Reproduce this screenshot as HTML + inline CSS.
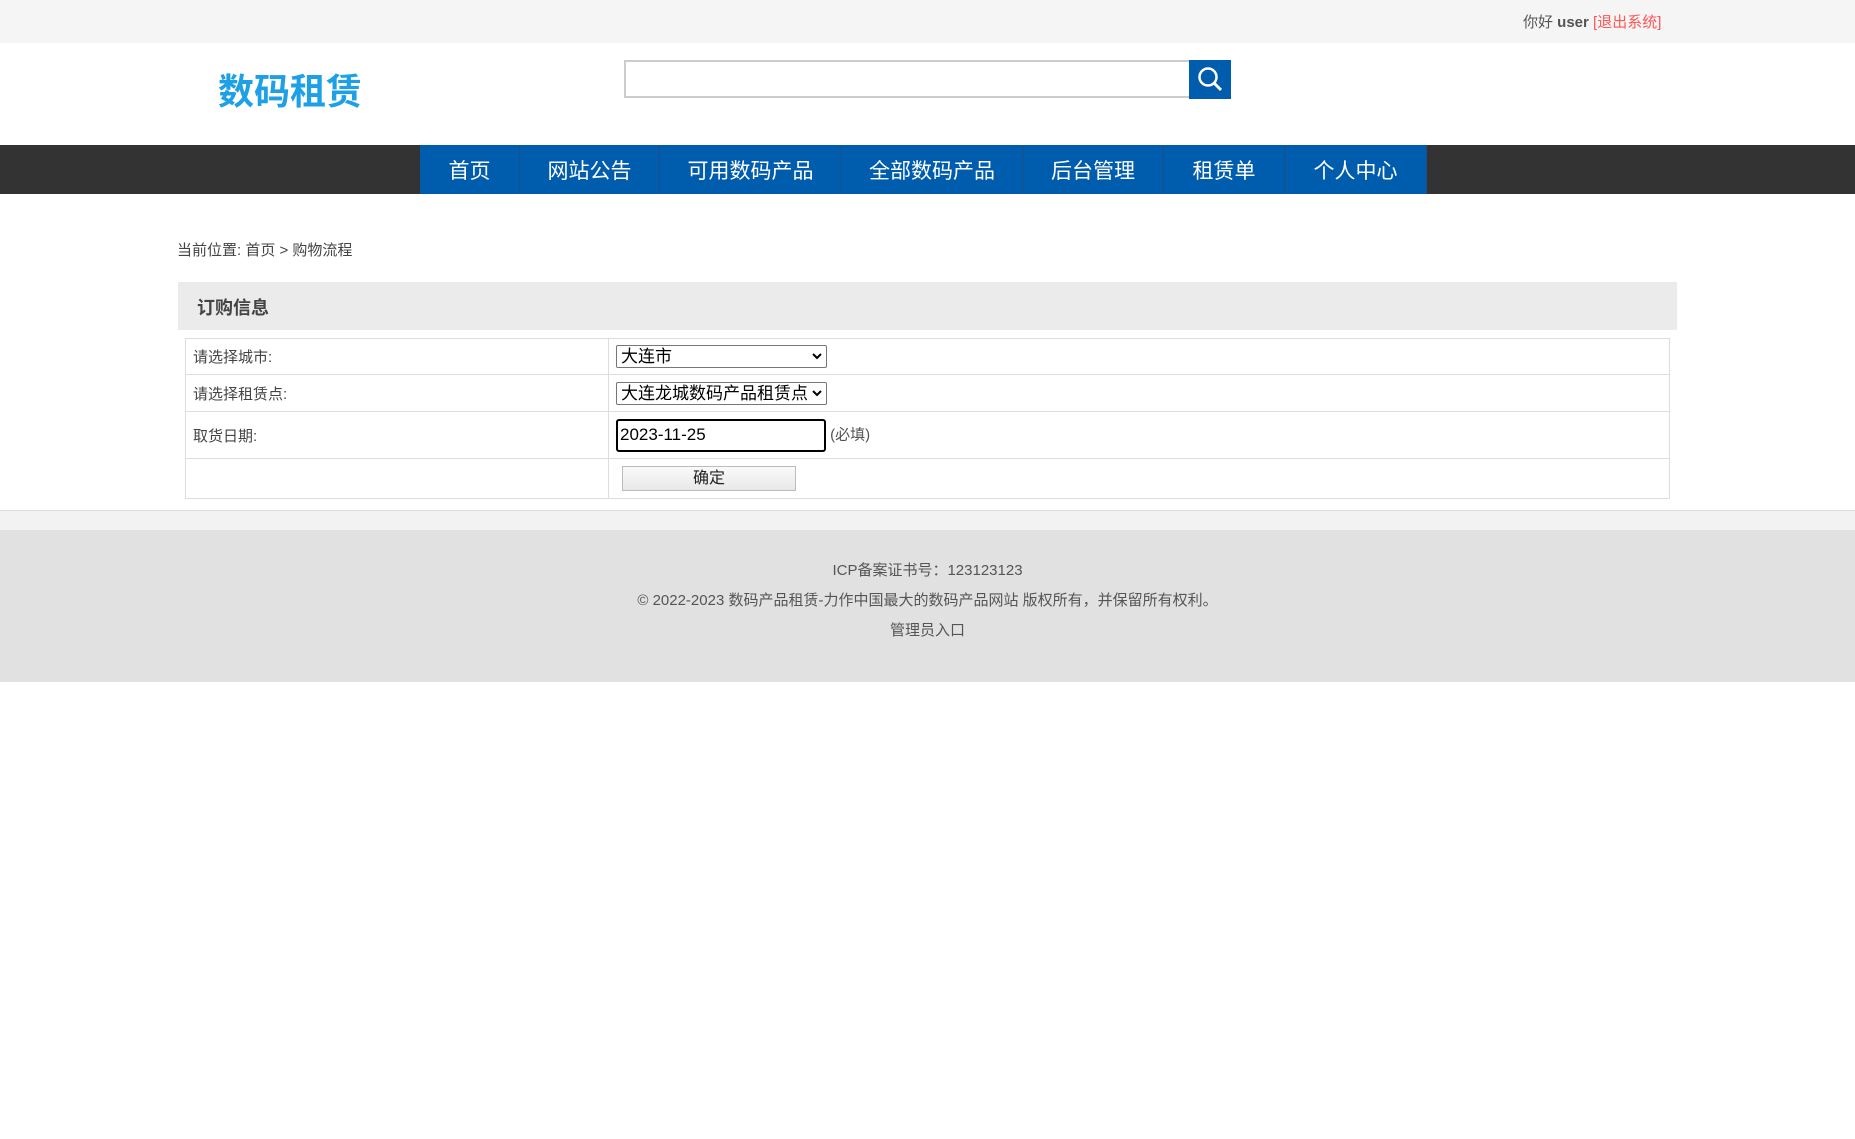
<!DOCTYPE html>
<html><head><meta charset="utf-8"><style>
*{margin:0;padding:0;box-sizing:border-box}
body{width:1855px;height:1139px;background:#fff;font-family:"Liberation Sans","Noto Sans CJK SC",sans-serif;position:relative;overflow:hidden;color:#333}
.a{position:absolute}
.nav a{position:absolute;top:0;height:49px;line-height:49px;padding-top:2px;text-align:center;color:#fff;font-size:21px;border-right:1px solid #1a4f86}
td{border:1px solid #ddd;font-size:15px;color:#444;padding-left:7px}
.sel{position:absolute;right:2px;top:0;background:#fff;width:14px;height:21px}
</style></head><body>
<div class="a" style="left:0;top:0;width:1855px;height:43px;background:#f5f5f5"></div>
<div class="a" style="left:1523px;top:11px;font-size:15px;color:#555">你好 <b>user</b> <span style="color:#f55">[退出系统]</span></div>
<div class="a" style="left:218px;top:63px;font-size:36px;font-weight:bold;color:#1ea0e6">数码租赁</div>
<div class="a" style="left:624px;top:60px;width:566px;height:38px;border:2px solid #ccc;border-right:none"></div>
<div class="a" style="left:1189px;top:60px;width:42px;height:39px;background:#005cad">
<svg width="42" height="39" viewBox="0 0 42 39"><circle cx="19" cy="17" r="8.5" fill="none" stroke="#fff" stroke-width="2.5"/><line x1="25" y1="23" x2="32" y2="30" stroke="#fff" stroke-width="3"/></svg></div>
<div class="a" style="left:0;top:145px;width:1855px;height:49px;background:#333"></div>
<div class="a nav" style="left:420px;top:145px;width:1007px;height:49px;background:#005cad;overflow:hidden">
<a style="left:0;width:100px">首页</a>
<a style="left:100px;width:140px">网站公告</a>
<a style="left:240px;width:182px">可用数码产品</a>
<a style="left:422px;width:181px">全部数码产品</a>
<a style="left:603px;width:141px">后台管理</a>
<a style="left:744px;width:121px">租赁单</a>
<a style="left:865px;width:142px">个人中心</a>
</div>
<div class="a" style="left:177px;top:239px;font-size:15px;color:#444">当前位置: 首页 &gt; 购物流程</div>
<div class="a" style="left:178px;top:282px;width:1499px;height:48px;background:#ebebeb"></div>
<div class="a" style="left:197px;top:294px;font-size:18px;font-weight:bold;color:#444">订购信息</div>
<table class="a" style="left:185px;top:338px;width:1485px;border-collapse:collapse">
<tr style="height:36px"><td style="width:423px">请选择城市:</td><td><div style="width:211px;height:23px;border:1px solid #767676;border-radius:2px;font-size:17px;color:#000;padding-left:4px;line-height:21px;position:relative">大连市<svg class="sel" viewBox="0 0 14 21"><path d="M3 8 L7 12 L11 8" fill="none" stroke="#000" stroke-width="2"/></svg></div></td></tr>
<tr style="height:37px"><td>请选择租赁点:</td><td><div style="width:211px;height:23px;border:1px solid #767676;border-radius:2px;font-size:17px;color:#000;padding-left:4px;line-height:21px;position:relative;overflow:hidden;white-space:nowrap">大连龙城数码产品租赁点<svg class="sel" viewBox="0 0 14 21"><path d="M3 8 L7 12 L11 8" fill="none" stroke="#000" stroke-width="2"/></svg></div></td></tr>
<tr style="height:47px"><td>取货日期:</td><td><div style="display:inline-block;vertical-align:middle;width:210px;height:33px;border:2px solid #000;border-radius:3px;font-size:17px;color:#000;padding-left:2px;line-height:28px">2023-11-25</div> <span style="font-size:15px;color:#555">(必填)</span></td></tr>
<tr style="height:40px"><td></td><td><div style="width:174px;height:25px;margin-left:6px;border:1px solid #bbb;background:linear-gradient(#fafafa,#e8e8e8);text-align:center;font-size:16px;line-height:23px;color:#222">确定</div></td></tr>
</table>
<div class="a" style="left:0;top:510px;width:1855px;height:1px;background:#ddd"></div>
<div class="a" style="left:0;top:511px;width:1855px;height:19px;background:#f2f2f2"></div>
<div class="a" style="left:0;top:530px;width:1855px;height:152px;background:#e1e1e1;text-align:center;font-size:15px;color:#555;line-height:30px;padding-top:26px">
ICP备案证书号：123123123<br>© 2022-2023 数码产品租赁-力作中国最大的数码产品网站 版权所有，并保留所有权利。<br>管理员入口</div>
</body></html>
